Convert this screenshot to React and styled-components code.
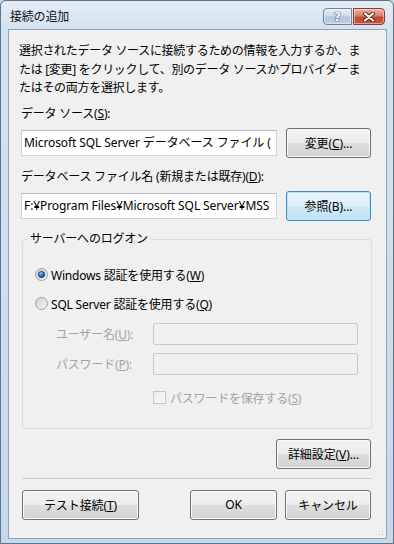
import React from 'react'
import styled, { createGlobalStyle } from 'styled-components'

const Global = createGlobalStyle`
  html, body { margin: 0; padding: 0; background: #c7d9ea; }
  body { font-family: "Noto Sans", "Noto Sans CJK JP", sans-serif; }
`

const Window = styled.div`
  width: 394px;
  height: 544px;
  box-sizing: border-box;
  display: flex;
  flex-direction: column;
  background: linear-gradient(#e4edf6 0px, #d3e2f0 28px, #c6d9eb 100%);
  border: 1px solid #5f7488;
  border-radius: 6px 6px 0 0;
  font-family: "Noto Sans", "Noto Sans CJK JP", sans-serif;
  font-size: 12px;
  color: #000;
`

const TitleBar = styled.div`
  height: 28px;
  display: flex;
  align-items: flex-start;
  padding: 0 8px 0 9px;
`

const Title = styled.div`
  flex: 1;
  line-height: 31px;
  font-size: 12px;
  letter-spacing: -0.2px;
  color: #111;
`

const CaptionButtons = styled.div`
  display: flex;
  gap: 1px;
  margin-top: 7px;
`

const CaptionButton = styled.div`
  width: ${p => p.$w}px;
  height: 17px;
  box-sizing: border-box;
  display: flex;
  align-items: center;
  justify-content: center;
  border: 1px solid ${p => (p.$close ? '#8a3a30' : '#6f8298')};
  border-radius: ${p => (p.$close ? '0 4px 4px 0' : '4px 0 0 4px')};
  background: ${p =>
    p.$close
      ? 'linear-gradient(#eab3a3 0%, #d7806c 45%, #c24a36 55%, #c9543c 100%)'
      : 'linear-gradient(#e8eef5 0%, #cfdbe8 45%, #b4c6da 55%, #bccfe2 100%)'};
  box-shadow: inset 0 0 0 1px rgba(255, 255, 255, 0.45);
`

const HelpGlyph = styled.span`
  font-family: "DejaVu Sans", sans-serif;
  font-weight: bold;
  font-size: 12px;
  line-height: 1;
  color: #fff;
  text-shadow: 0 0 1px #3d5066, 0 0 1px #3d5066, 0 0 1px #3d5066;
`

const Client = styled.div`
  position: relative;
  flex: 1;
  margin: 0 6px 4px 7px;
  background: #f0f0f0;
  border: 1px solid #8ea4ba;
  padding: 12px 15px 0 12px;
  display: flex;
  flex-direction: column;
`

const Intro = styled.p`
  margin: 0 0 0 -2px;
  line-height: 18.5px;
  letter-spacing: -0.3px;
`

const FieldLabel = styled.div`
  line-height: 16px;
  margin-top: ${p => p.$mt}px;
  letter-spacing: -0.2px;
`

const FieldRow = styled.div`
  display: flex;
  align-items: center;
  gap: 9px;
  margin-top: 6px;
`

const TextField = styled.div`
  flex: 1;
  min-width: 0;
  height: 26px;
  box-sizing: border-box;
  border: 1px solid #cfd3d7;
  border-top-color: #b9bdc2;
  background: #fff;
  padding-left: 2px;
  line-height: 24px;
  white-space: nowrap;
  overflow: hidden;
  letter-spacing: -0.1px;
`

const Button = styled.button`
  width: ${p => p.$w}px;
  height: 30px;
  flex: none;
  box-sizing: border-box;
  padding: 0;
  font-family: inherit;
  font-size: 12px;
  color: #000;
  border-radius: 3px;
  border: 1px solid ${p => (p.$default ? '#3c8cc4' : '#707070')};
  background: ${p =>
    p.$default
      ? 'linear-gradient(#eaf5fc 0%, #e2f1fb 49%, #d0e9f8 50%, #c3e2f6 100%)'
      : 'linear-gradient(#f3f3f3 0%, #ececec 49%, #dedede 50%, #d2d2d2 100%)'};
  box-shadow: inset 0 0 0 1px ${p => (p.$default ? '#bfe5f9' : '#fafafa')};
  letter-spacing: -0.1px;
  margin-left: ${p => p.$ml || 0}px;
`

const GroupBox = styled.div`
  position: relative;
  margin: 18px -1px 0 1px;
  height: 190px;
  box-sizing: border-box;
  border: 1px solid #d8dde2;
  border-radius: 3px;
  padding: 26px 13px 0 12px;
  display: flex;
  flex-direction: column;
`

const Legend = styled.span`
  position: absolute;
  top: -9px;
  left: 5px;
  padding: 0 2px;
  background: #f0f0f0;
  line-height: 16px;
  letter-spacing: -0.2px;
`

const OptionRow = styled.div`
  display: flex;
  align-items: center;
  height: 18px;
  gap: 3px;
  margin-top: ${p => p.$mt || 0}px;
  color: ${p => (p.$disabled ? '#a3a3a3' : '#000')};
  letter-spacing: -0.2px;
`

const CredRow = styled.div`
  display: flex;
  align-items: center;
  margin-top: ${p => p.$mt}px;
`

const CredLabel = styled.div`
  width: 118px;
  padding-left: 21px;
  box-sizing: border-box;
  color: #a3a3a3;
  white-space: nowrap;
  letter-spacing: -0.2px;
`

const DisabledField = styled.div`
  flex: 1;
  height: 22px;
  box-sizing: border-box;
  border: 1px solid #c8c8c8;
  border-radius: 2px;
  background: #f0f0f0;
`

const CheckRow = styled.div`
  display: flex;
  align-items: center;
  gap: 4px;
  margin: 15px 0 0 118px;
  color: #a3a3a3;
  height: 16px;
  letter-spacing: -0.2px;
`

const CheckBox = styled.span`
  width: 13px;
  height: 13px;
  box-sizing: border-box;
  border: 1px solid #c6c6c6;
  background: linear-gradient(135deg, #ececec, #f8f8f8);
`

const AdvancedRow = styled.div`
  display: flex;
  justify-content: flex-end;
  margin-top: 10px;
`

const Separator = styled.div`
  height: 1px;
  background: #cdcdcd;
  margin: 9px -1px 0 1px;
`

const Footer = styled.div`
  display: flex;
  align-items: center;
  margin-top: 11px;
  padding-left: 1px;
`

const Spacer = styled.div`
  flex: 1;
`

const Grip = styled.svg`
  position: absolute;
  right: 1px;
  bottom: 1px;
`

const Radio = ({ checked }) => (
  <svg width="13" height="13" viewBox="0 0 13 13">
    <defs>
      <linearGradient id={checked ? 'rg1' : 'rg0'} x1="0" y1="0" x2="1" y2="1">
        <stop offset="0" stopColor="#d0d0d0" />
        <stop offset="1" stopColor="#f6f6f6" />
      </linearGradient>
      <radialGradient id="dot" cx="0.4" cy="0.35" r="0.7">
        <stop offset="0" stopColor="#8fd2f7" />
        <stop offset="0.5" stopColor="#1e78c2" />
        <stop offset="1" stopColor="#0b3f78" />
      </radialGradient>
    </defs>
    <circle cx="6.5" cy="6.5" r="6" fill={`url(#${checked ? 'rg1' : 'rg0'})`} stroke="#a0a0a0" />
    {checked && <circle cx="6.5" cy="6.5" r="3.3" fill="url(#dot)" stroke="#23466d" strokeWidth="0.6" />}
  </svg>
)

export default function App() {
  return (
    <>
      <Global />
      <Window>
        <TitleBar>
          <Title>接続の追加</Title>
          <CaptionButtons>
            <CaptionButton $w={29}>
              <HelpGlyph>?</HelpGlyph>
            </CaptionButton>
            <CaptionButton $w={32} $close>
              <svg width="12" height="10" viewBox="0 0 12 10">
                <path d="M2 1.5 L10 8.5 M10 1.5 L2 8.5" stroke="#5a1e14" strokeWidth="4" strokeLinecap="round" />
                <path d="M2 1.5 L10 8.5 M10 1.5 L2 8.5" stroke="#fff" strokeWidth="2.2" strokeLinecap="round" />
              </svg>
            </CaptionButton>
          </CaptionButtons>
        </TitleBar>
        <Client>
          <Intro>
            選択されたデータ ソースに接続するための情報を入力するか、ま<br />
            たは [変更] をクリックして、別のデータ ソースかプロバイダーま<br />
            たはその両方を選択します。
          </Intro>

          <FieldLabel $mt={8}>
            データ ソース(<u>S</u>):
          </FieldLabel>
          <FieldRow>
            <TextField>Microsoft SQL Server データベース ファイル (</TextField>
            <Button $w={85}>
              変更(<u>C</u>)...
            </Button>
          </FieldRow>

          <FieldLabel $mt={11}>
            データベース ファイル名 (新規または既存)(<u>D</u>):
          </FieldLabel>
          <FieldRow>
            <TextField>F:¥Program Files¥Microsoft SQL Server¥MSS</TextField>
            <Button $w={85} $default>
              参照(B)...
            </Button>
          </FieldRow>

          <GroupBox>
            <Legend>サーバーへのログオン</Legend>
            <OptionRow>
              <Radio checked />
              <span>
                Windows 認証を使用する(<u>W</u>)
              </span>
            </OptionRow>
            <OptionRow $mt={11}>
              <Radio />
              <span>
                SQL Server 認証を使用する(<u>Q</u>)
              </span>
            </OptionRow>
            <CredRow $mt={10}>
              <CredLabel>
                ユーザー名(<u>U</u>):
              </CredLabel>
              <DisabledField />
            </CredRow>
            <CredRow $mt={8}>
              <CredLabel>
                パスワード(<u>P</u>):
              </CredLabel>
              <DisabledField />
            </CredRow>
            <CheckRow>
              <CheckBox />
              <span>
                パスワードを保存する(<u>S</u>)
              </span>
            </CheckRow>
          </GroupBox>

          <AdvancedRow>
            <Button $w={95}>
              詳細設定(<u>V</u>)...
            </Button>
          </AdvancedRow>

          <Separator />

          <Footer>
            <Button $w={117}>
              テスト接続(<u>T</u>)
            </Button>
            <Spacer />
            <Button $w={87}>OK</Button>
            <Button $w={86} $ml={8}>
              キャンセル
            </Button>
          </Footer>

          <Grip width="10" height="10" viewBox="0 0 10 10">
            <rect x="7" y="7" width="1" height="1" fill="#b8b8b8" />
            <rect x="4" y="7" width="1" height="1" fill="#b8b8b8" />
            <rect x="7" y="4" width="1" height="1" fill="#b8b8b8" />
          </Grip>
        </Client>
      </Window>
    </>
  )
}
